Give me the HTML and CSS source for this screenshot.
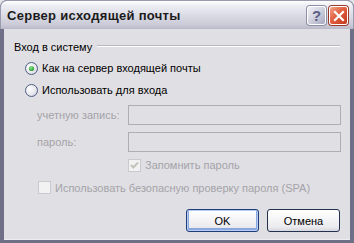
FILE: index.html
```html
<!DOCTYPE html>
<html lang="ru">
<head>
<meta charset="utf-8">
<title>Сервер исходящей почты</title>
<link rel="stylesheet" href="styles.css">
</head>
<body>
<div class="window">
  <div class="titlebar">
    <div class="title">Сервер исходящей почты</div>
    <div class="caption-btns">
      <div class="cbtn help">?</div>
      <div class="cbtn close">
        <svg width="12" height="12" viewBox="0 0 12 12"><path d="M2 2 L10 10 M10 2 L2 10" stroke="#fff" stroke-width="2.2" stroke-linecap="square"/></svg>
      </div>
    </div>
  </div>
  <div class="client">
    <div class="group-head">
      <span class="group-label">Вход в систему</span>
      <span class="group-line"></span>
    </div>
    <div class="radio-row r1">
      <svg class="radio" width="13" height="13" viewBox="0 0 13 13">
        <defs>
          <radialGradient id="rg" cx="0.35" cy="0.35" r="0.8">
            <stop offset="0" stop-color="#ffffff"/>
            <stop offset="0.6" stop-color="#e8e8ee"/>
            <stop offset="1" stop-color="#c9c9d4"/>
          </radialGradient>
          <radialGradient id="dot" cx="0.4" cy="0.35" r="0.7">
            <stop offset="0" stop-color="#8ee58c"/>
            <stop offset="1" stop-color="#1f9a2a"/>
          </radialGradient>
        </defs>
        <circle cx="6.5" cy="6.5" r="6" fill="url(#rg)" stroke="#4e5f86" stroke-width="1"/>
        <circle cx="6.5" cy="6.5" r="2.6" fill="url(#dot)"/>
      </svg>
      <span>Как на сервер входящей почты</span>
    </div>
    <div class="radio-row r2">
      <svg class="radio" width="13" height="13" viewBox="0 0 13 13">
        <circle cx="6.5" cy="6.5" r="6" fill="url(#rg)" stroke="#4e5f86" stroke-width="1"/>
      </svg>
      <span>Использовать для входа</span>
    </div>
    <div class="field f1">
      <span class="flabel">учетную запись:</span>
      <span class="input"></span>
    </div>
    <div class="field f2">
      <span class="flabel">пароль:</span>
      <span class="input"></span>
    </div>
    <div class="check-row remember">
      <span class="cbox">
        <svg width="11" height="11" viewBox="0 0 11 11"><path d="M2 5 L4.3 7.5 L9 2.5" fill="none" stroke="#c4c3bb" stroke-width="2"/></svg>
      </span>
      <span class="dis">Запомнить пароль</span>
    </div>
    <div class="check-row spa">
      <span class="cbox"></span>
      <span class="dis">Использовать безопасную проверку пароля (SPA)</span>
    </div>
    <div class="buttons">
      <div class="btn default">OK</div>
      <div class="btn">Отмена</div>
    </div>
  </div>
</div>
</body>
</html>
```
FILE: styles.css
```css
html, body {
  margin: 0;
  padding: 0;
  background: #e6e6ea;
}
.window {
  width: 354px;
  height: 243px;
  box-sizing: border-box;
  background: #6f6f88;
  border-radius: 7px 7px 0 0;
  display: flex;
  flex-direction: column;
  overflow: hidden;
  font-family: "Liberation Sans", Arial, sans-serif;
  font-size: 11px;
  color: #000;
}
.titlebar {
  height: 29px;
  flex: none;
  display: flex;
  align-items: center;
  justify-content: space-between;
  background: linear-gradient(#ffffff 0%, #eeeef4 15%, #dcdce6 50%, #cbcbd8 85%, #b8b8c8 100%);
  border: 1px solid #9a9ab0;
  border-bottom: none;
  border-radius: 7px 7px 0 0;
  box-sizing: border-box;
  padding: 0 5px 0 6px;
}
.title {
  font-family: "Liberation Sans", Arial, sans-serif;
  font-weight: bold;
  font-size: 13px;
  letter-spacing: 0.3px;
  color: #1b1b1b;
  padding-top: 1px;
}
.caption-btns {
  display: flex;
  gap: 3px;
  padding-top: 1px;
}
.cbtn {
  width: 19px;
  height: 19px;
  box-sizing: border-box;
  border: 1px solid #ffffff;
  border-radius: 3px;
  display: flex;
  align-items: center;
  justify-content: center;
}
.help {
  background: linear-gradient(135deg, #f2f2f8 0%, #cfd0de 50%, #a6a8c0 100%);
  box-shadow: 0 0 0 1px #8d8fa8;
  color: #5a5e86;
  font-weight: bold;
  font-size: 15px;
  font-family: "Liberation Sans", Arial, sans-serif;
}
.close {
  background: linear-gradient(135deg, #f3a58f 0%, #e0603f 45%, #c5361c 100%);
  box-shadow: 0 0 0 1px #9a3a2a;
}
.client {
  flex: 1;
  margin: 0 4px 4px 4px;
  background: #e0dfe3;
  box-shadow: 0 1px 0 #ededf0;
  display: flex;
  flex-direction: column;
}
.group-head {
  margin-top: 11px;
  height: 14px;
  display: flex;
  align-items: center;
  padding-left: 10px;
  padding-right: 10px;
}
.group-label {
  white-space: nowrap;
}
.group-line {
  flex: 1;
  margin-left: 5px;
  margin-top: -2px;
  height: 1px;
  background: #b9b8c2;
  border-bottom: 1px solid #ffffff;
}
.radio-row {
  height: 16px;
  display: flex;
  align-items: center;
  padding-left: 21px;
  gap: 4px;
  white-space: nowrap;
}
.r1 { margin-top: 6px; }
.r2 { margin-top: 6px; }
.radio { flex: none; }
.field {
  height: 20px;
  display: flex;
  align-items: center;
  padding-left: 33px;
  padding-right: 9px;
  margin-top: 7px;
}
.flabel {
  width: 91px;
  flex: none;
  color: #a4a3a9;
}
.input {
  flex: 1;
  height: 20px;
  box-sizing: border-box;
  border: 1px solid #adadb5;
  background: #e0dfe3;
}
.check-row {
  display: flex;
  align-items: center;
  gap: 4px;
  white-space: nowrap;
}
.remember {
  margin-top: 6px;
  height: 14px;
  padding-left: 124px;
}
.spa {
  margin-top: 9px;
  height: 13px;
  padding-left: 34px;
}
.cbox {
  width: 13px;
  height: 13px;
  box-sizing: border-box;
  border: 1px solid #cac9cf;
  background: #f2f2f2;
  display: flex;
  align-items: center;
  justify-content: center;
  flex: none;
}
.dis {
  color: #a4a3a9;
}
.buttons {
  margin-top: 15px;
  display: flex;
  justify-content: flex-end;
  gap: 8px;
  padding-right: 10px;
}
.btn {
  width: 73px;
  height: 23px;
  box-sizing: border-box;
  border: 1px solid #23304e;
  border-radius: 3px;
  background: linear-gradient(#ffffff 0%, #f6f6f8 40%, #ebebef 80%, #d6d6de 100%);
  display: flex;
  align-items: center;
  justify-content: center;
  font-size: 11px;
}
.btn.default {
  box-shadow: inset 0 0 0 1px #b9cdf0, inset 0 -1px 0 2px #8aa8e0;
  border-color: #1f3d7a;
}
```
